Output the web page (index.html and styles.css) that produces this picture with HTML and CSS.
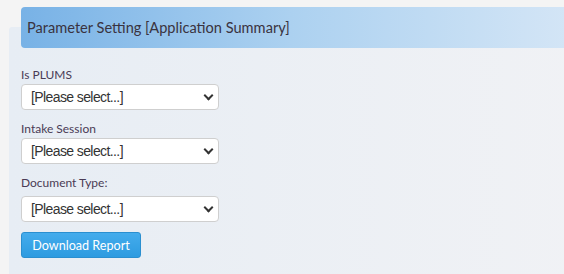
FILE: index.html
```html
<!DOCTYPE html>
<html lang="en">
<head>
  <meta charset="UTF-8">
  <title>Parameter Setting</title>
  <link rel="stylesheet" href="styles.css">
</head>
<body>
  <div class="panel">
    <div class="panel-header">Parameter Setting [Application Summary]</div>

    <form class="report-form">
      <label class="field-label" for="isPlums">Is PLUMS</label>
      <div class="select-box">
        <select id="isPlums">
          <option>[Please select...]</option>
        </select>
      </div>

      <label class="field-label" for="intake">Intake Session</label>
      <div class="select-box">
        <select id="intake">
          <option>[Please select...]</option>
        </select>
      </div>

      <label class="field-label spaced" for="docType">Document Type:</label>
      <div class="select-box">
        <select id="docType">
          <option>[Please select...]</option>
        </select>
      </div>

      <button type="button" class="btn">Download Report</button>
    </form>
  </div>
</body>
</html>
```

FILE: styles.css
```css
html, body {
  margin: 0;
  height: 100%;
  overflow: hidden;
}

body {
  background-color: #f4f4f4;
  font-family: Lato, "Noto Sans", sans-serif;
  color: #3d3346;
}

.panel {
  width: 600px;
  height: 300px;
  margin: 27px 0 0 9px;
  padding: 0 12px;
  border-radius: 3px 0 0 0;
  background: linear-gradient(90deg, #e7edf4, #f1f2f5);
}

.panel-header {
  position: relative;
  top: -20px;
  height: 41px;
  margin-bottom: -20px;
  padding-left: 6px;
  line-height: 41px;
  font-size: 14.6px;
  color: #3a3340;
  border-radius: 4px 0 0 4px;
  background: linear-gradient(90deg, #78b2e6, #acd1f0 45%, #dbe9f7);
}

.report-form {
  padding-top: 18px;
}

.field-label {
  display: block;
  height: 18px;
  line-height: 18px;
  font-size: 12px;
  color: #4a3b55;
}

.field-label.spaced {
  margin-bottom: 4px;
}

.select-box {
  position: relative;
  width: 198px;
  margin-bottom: 10px;
}

.select-box select {
  -webkit-appearance: none;
  appearance: none;
  width: 198px;
  height: 26px;
  padding: 0 0 0 9px;
  border: 1px solid #cfcfcf;
  border-radius: 4px;
  background-color: #fff;
  font-family: "Liberation Sans", Arial, sans-serif;
  font-size: 14px;
  letter-spacing: -0.6px;
  color: #333;
}

.select-box::after {
  content: "";
  position: absolute;
  right: 7px;
  top: 8px;
  width: 5px;
  height: 5px;
  border-right: 2px solid #333;
  border-bottom: 2px solid #333;
  transform: rotate(45deg);
  pointer-events: none;
}

.btn {
  width: 120px;
  height: 26px;
  padding: 0;
  border: 1px solid #2a8fd0;
  border-radius: 3px;
  background: linear-gradient(#44acec, #2d9be0);
  color: #fff;
  font-family: Lato, "Noto Sans", sans-serif;
  font-size: 12.6px;
  cursor: pointer;
}
```
